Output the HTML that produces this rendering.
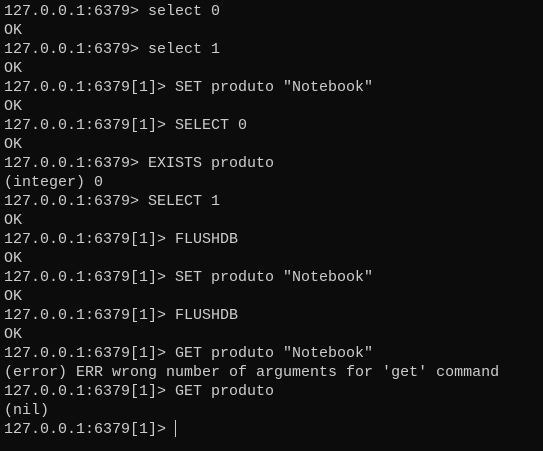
<!DOCTYPE html>
<html><head><meta charset="utf-8"><style>
html,body{margin:0;padding:0;background:#0c0c0c;width:543px;height:451px;overflow:hidden}
pre{margin:0;padding:2px 0 0 4px;font-family:"Liberation Mono",monospace;font-size:15px;line-height:19px;color:#cccccc;white-space:pre}
.cur{display:inline-block;width:1px;height:17px;background:#ccc;vertical-align:-4px}
</style></head><body><pre>127.0.0.1:6379&gt; select 0
OK
127.0.0.1:6379&gt; select 1
OK
127.0.0.1:6379[1]&gt; SET produto "Notebook"
OK
127.0.0.1:6379[1]&gt; SELECT 0
OK
127.0.0.1:6379&gt; EXISTS produto
(integer) 0
127.0.0.1:6379&gt; SELECT 1
OK
127.0.0.1:6379[1]&gt; FLUSHDB
OK
127.0.0.1:6379[1]&gt; SET produto "Notebook"
OK
127.0.0.1:6379[1]&gt; FLUSHDB
OK
127.0.0.1:6379[1]&gt; GET produto "Notebook"
(error) ERR wrong number of arguments for 'get' command
127.0.0.1:6379[1]&gt; GET produto
(nil)
127.0.0.1:6379[1]&gt; <span class="cur"></span></pre></body></html>
